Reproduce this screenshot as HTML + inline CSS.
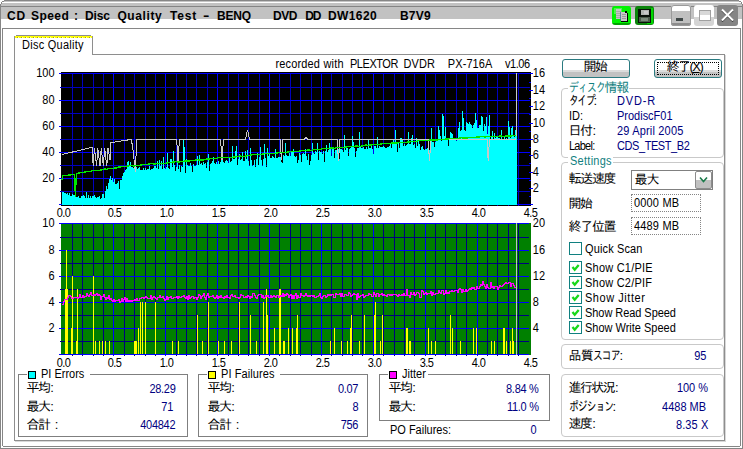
<!DOCTYPE html>
<html><head><meta charset="utf-8"><title>CD Speed : Disc Quality Test</title>
<style>
html,body{margin:0;padding:0}
body{width:743px;height:449px;position:relative;overflow:hidden;background:#fff;font-family:'Liberation Sans','IPAGothic',sans-serif;font-size:12px;color:#000}
u{text-decoration:underline}
</style></head><body>
<div style="position:absolute;left:0px;top:0px;width:743px;height:3px;background:#fff;"></div>
<div style="position:absolute;left:3px;top:1px;width:737px;height:1px;background:#c4c4c4;"></div>
<div style="position:absolute;left:1px;top:3px;width:741px;height:16px;background:#c2c2c2;"></div>
<div style="position:absolute;left:1px;top:6px;width:741px;height:1px;background:#848484;"></div>
<div style="position:absolute;left:1px;top:19px;width:741px;height:9px;background:#fff;"></div>
<div style="position:absolute;left:4px;top:0px;width:735px;height:1px;background:#868686;"></div>
<div style="position:absolute;left:2px;top:1px;width:2px;height:1px;background:#868686;"></div>
<div style="position:absolute;left:739px;top:1px;width:2px;height:1px;background:#868686;"></div>
<div style="position:absolute;left:1px;top:2px;width:1px;height:2px;background:#868686;"></div>
<div style="position:absolute;left:741px;top:2px;width:1px;height:2px;background:#868686;"></div>
<div style="position:absolute;left:0px;top:4px;width:1px;height:445px;background:#868686;"></div>
<div style="position:absolute;left:742px;top:4px;width:1px;height:445px;background:#868686;"></div>
<div style="position:absolute;left:0px;top:448px;width:743px;height:1px;background:#868686;"></div>
<div style="position:absolute;left:2px;top:28px;width:739px;height:1px;background:#868686;"></div>
<div style="position:absolute;left:2px;top:28px;width:1px;height:418px;background:#868686;"></div>
<div style="position:absolute;left:740px;top:28px;width:1px;height:418px;background:#868686;"></div>
<div style="position:absolute;left:3px;top:446px;width:737px;height:1px;background:#868686;"></div>
<div style="position:absolute;left:7px;top:10px;font-size:12px;line-height:12px;color:#000;white-space:pre;letter-spacing:0.9px;font-weight:bold;">CD</div>
<div style="position:absolute;left:31px;top:10px;font-size:12px;line-height:12px;color:#000;white-space:pre;letter-spacing:0.45px;font-weight:bold;">Speed</div>
<div style="position:absolute;left:74px;top:10px;font-size:12px;line-height:12px;color:#000;white-space:pre;font-weight:bold;">:</div>
<div style="position:absolute;left:85px;top:10px;font-size:12px;line-height:12px;color:#000;white-space:pre;letter-spacing:-0.1px;font-weight:bold;">Disc</div>
<div style="position:absolute;left:117.4px;top:10px;font-size:12px;line-height:12px;color:#000;white-space:pre;letter-spacing:0.6px;font-weight:bold;">Quality</div>
<div style="position:absolute;left:170px;top:10px;font-size:12px;line-height:12px;color:#000;white-space:pre;letter-spacing:0.8px;font-weight:bold;">Test</div>
<div style="position:absolute;left:203px;top:10px;font-size:12px;line-height:12px;color:#000;white-space:pre;font-weight:bold;transform:scaleX(1.6);transform-origin:0 0;">-</div>
<div style="position:absolute;left:217px;top:10px;font-size:12px;line-height:12px;color:#000;white-space:pre;letter-spacing:-0.2px;font-weight:bold;">BENQ</div>
<div style="position:absolute;left:273px;top:10px;font-size:12px;line-height:12px;color:#000;white-space:pre;letter-spacing:-0.5px;font-weight:bold;">DVD</div>
<div style="position:absolute;left:305.2px;top:10px;font-size:12px;line-height:12px;color:#000;white-space:pre;letter-spacing:-1px;font-weight:bold;">DD</div>
<div style="position:absolute;left:328px;top:10px;font-size:12px;line-height:12px;color:#000;white-space:pre;letter-spacing:0.4px;font-weight:bold;">DW1620</div>
<div style="position:absolute;left:400px;top:10px;font-size:12px;line-height:12px;color:#000;white-space:pre;letter-spacing:0.2px;font-weight:bold;">B7V9</div>
<div style="position:absolute;left:612px;top:6px;width:19px;height:19px;border-radius:3px;background:linear-gradient(#00f400 0,#00f400 87%,#00a400 87%);overflow:hidden"><svg width="19" height="19" style="position:absolute;left:0;top:0" shape-rendering="crispEdges"><rect x="2" y="2" width="8" height="6" fill="#7ef07e" opacity="0.6"/><rect x="4" y="3" width="5" height="10" fill="#c6c6c6"/><path d="M4 5.5h5M4 7.5h5M4 9.5h5M4 11.5h5" stroke="#a8a8a8"/><rect x="9" y="6" width="6" height="9" fill="#c8c8c8"/><path d="M10 8.5h4M10 10.5h4M10 12.5h4" stroke="#9a9a9a"/><rect x="15" y="7" width="1" height="9" fill="#000"/><rect x="9" y="15" width="7" height="1" fill="#000"/><rect x="13" y="5" width="2" height="2" fill="#000"/><rect x="8" y="6" width="1" height="9" fill="#3a6a9a" opacity="0.7"/></svg></div>
<div style="position:absolute;left:635px;top:6px;width:19px;height:19px;border-radius:3px;background:#0b840b;overflow:hidden"><svg width="19" height="19" style="position:absolute;left:0;top:0" shape-rendering="crispEdges"><rect x="16" y="2" width="2" height="16" fill="#00d800"/><rect x="12" y="17" width="6" height="1" fill="#00d800"/><rect x="3" y="3" width="13" height="14" fill="#081008"/><rect x="6" y="4" width="8" height="5" fill="#b0b4b0"/><rect x="9" y="5" width="4" height="3" fill="#c8c8c8"/><rect x="4" y="11" width="11" height="5" fill="#4a5a4a"/><rect x="6" y="12" width="7" height="3" fill="#7a8a7a"/></svg></div>
<div style="position:absolute;left:671px;top:5px;width:20px;height:21px;border-radius:3px;box-shadow:inset 0 0 0 1px #9a9a9a;background:linear-gradient(#fff 0,#fff 28%,#c0c0c0 28%,#c0c0c0 86%,#8c8c8c 86%);"><div style="position:absolute;left:5px;top:13px;width:7px;height:3px;background:#404848"></div></div>
<div style="position:absolute;left:694px;top:5px;width:20px;height:21px;border-radius:3px;background:linear-gradient(#fff 0,#fff 55%,#d4d4d4 55%);"><div style="position:absolute;left:5px;top:5px;width:10px;height:9px;border:1px solid #a0a0a0;background:linear-gradient(#d8d8d8 0,#d8d8d8 50%,#fff 50%)"></div></div>
<div style="position:absolute;left:717px;top:5px;width:21px;height:21px;border-radius:3px;background:#858585;"><svg width="21" height="21" style="position:absolute;left:0;top:0"><path d="M5 5.5 L16 16.5 M16 5.5 L5 16.5" stroke="#222" stroke-width="1.6" fill="none"/><path d="M5 4.5 L16 15.5 M16 4.5 L5 15.5" stroke="#fff" stroke-width="2" fill="none"/></svg></div>
<div style="position:absolute;left:14px;top:38px;width:1px;height:403px;background:#8e8e8e;"></div>
<div style="position:absolute;left:14px;top:440px;width:711px;height:1px;background:#8e8e8e;"></div>
<div style="position:absolute;left:724px;top:54px;width:1px;height:387px;background:#8e8e8e;"></div>
<div style="position:absolute;left:725px;top:55px;width:1px;height:387px;background:#d8d8d8;"></div>
<div style="position:absolute;left:15px;top:441px;width:711px;height:1px;background:#d8d8d8;"></div>
<div style="position:absolute;left:92px;top:54px;width:633px;height:1px;background:#8e8e8e;"></div>
<div style="position:absolute;left:92px;top:38px;width:1px;height:17px;background:#8e8e8e;"></div>
<div style="position:absolute;left:16px;top:35px;width:75px;height:1px;background:#8e8e8e;"></div>
<div style="position:absolute;left:14px;top:36px;width:1px;height:2px;background:#8e8e8e;"></div>
<div style="position:absolute;left:92px;top:36px;width:1px;height:2px;background:#8e8e8e;"></div>
<div style="position:absolute;left:15px;top:36px;width:77px;height:1px;background:#ffff00;"></div>
<div style="position:absolute;left:15px;top:37px;width:77px;height:1px;background:repeating-linear-gradient(90deg,#ffff00 0,#ffff00 2px,#a0a020 2px,#a0a020 3px,#ffffb0 3px,#ffffb0 4px)"></div>
<div style="position:absolute;left:22px;top:39px;font-size:12px;line-height:12px;color:#000;white-space:pre;letter-spacing:0.3px;transform:scaleX(0.915);transform-origin:0 0;">Disc Quality</div>
<svg width="743" height="449" viewBox="0 0 743 449" style="position:absolute;left:0;top:0" shape-rendering="crispEdges" font-family="Liberation Sans, sans-serif" font-size="12px" fill="#000"><rect x="61" y="72" width="470" height="134" fill="#000"/><rect x="72" y="73" width="1" height="133" fill="#0000c0"/><rect x="82" y="73" width="1" height="133" fill="#0000c0"/><rect x="93" y="73" width="1" height="133" fill="#0000c0"/><rect x="103" y="73" width="1" height="133" fill="#0000c0"/><rect x="113" y="73" width="1" height="133" fill="#0000ff"/><rect x="124" y="73" width="1" height="133" fill="#0000c0"/><rect x="134" y="73" width="1" height="133" fill="#0000c0"/><rect x="145" y="73" width="1" height="133" fill="#0000c0"/><rect x="155" y="73" width="1" height="133" fill="#0000c0"/><rect x="165" y="73" width="1" height="133" fill="#0000ff"/><rect x="176" y="73" width="1" height="133" fill="#0000c0"/><rect x="186" y="73" width="1" height="133" fill="#0000c0"/><rect x="196" y="73" width="1" height="133" fill="#0000c0"/><rect x="207" y="73" width="1" height="133" fill="#0000c0"/><rect x="217" y="73" width="1" height="133" fill="#0000ff"/><rect x="228" y="73" width="1" height="133" fill="#0000c0"/><rect x="238" y="73" width="1" height="133" fill="#0000c0"/><rect x="248" y="73" width="1" height="133" fill="#0000c0"/><rect x="259" y="73" width="1" height="133" fill="#0000c0"/><rect x="269" y="73" width="1" height="133" fill="#0000ff"/><rect x="279" y="73" width="1" height="133" fill="#0000c0"/><rect x="290" y="73" width="1" height="133" fill="#0000c0"/><rect x="300" y="73" width="1" height="133" fill="#0000c0"/><rect x="311" y="73" width="1" height="133" fill="#0000c0"/><rect x="321" y="73" width="1" height="133" fill="#0000ff"/><rect x="331" y="73" width="1" height="133" fill="#0000c0"/><rect x="342" y="73" width="1" height="133" fill="#0000c0"/><rect x="352" y="73" width="1" height="133" fill="#0000c0"/><rect x="362" y="73" width="1" height="133" fill="#0000c0"/><rect x="373" y="73" width="1" height="133" fill="#0000ff"/><rect x="383" y="73" width="1" height="133" fill="#0000c0"/><rect x="394" y="73" width="1" height="133" fill="#0000c0"/><rect x="404" y="73" width="1" height="133" fill="#0000c0"/><rect x="414" y="73" width="1" height="133" fill="#0000c0"/><rect x="425" y="73" width="1" height="133" fill="#0000ff"/><rect x="435" y="73" width="1" height="133" fill="#0000c0"/><rect x="445" y="73" width="1" height="133" fill="#0000c0"/><rect x="456" y="73" width="1" height="133" fill="#0000c0"/><rect x="466" y="73" width="1" height="133" fill="#0000c0"/><rect x="477" y="73" width="1" height="133" fill="#0000ff"/><rect x="487" y="73" width="1" height="133" fill="#0000c0"/><rect x="497" y="73" width="1" height="133" fill="#0000c0"/><rect x="508" y="73" width="1" height="133" fill="#0000c0"/><rect x="518" y="73" width="1" height="133" fill="#0000c0"/><rect x="59" y="204" width="471" height="1" fill="#0000ff"/><rect x="60" y="191" width="470" height="1" fill="#0000c0"/><rect x="59" y="178" width="471" height="1" fill="#0000ff"/><rect x="60" y="165" width="470" height="1" fill="#0000c0"/><rect x="59" y="152" width="471" height="1" fill="#0000ff"/><rect x="60" y="139" width="470" height="1" fill="#0000c0"/><rect x="59" y="126" width="471" height="1" fill="#0000ff"/><rect x="60" y="113" width="470" height="1" fill="#0000c0"/><rect x="59" y="100" width="471" height="1" fill="#0000ff"/><rect x="60" y="87" width="470" height="1" fill="#0000c0"/><rect x="59" y="73" width="471" height="1" fill="#0000ff"/><rect x="529" y="204" width="4" height="1" fill="#0000ff"/><rect x="529" y="196" width="2" height="1" fill="#0000ff"/><rect x="529" y="188" width="4" height="1" fill="#0000ff"/><rect x="529" y="180" width="2" height="1" fill="#0000ff"/><rect x="529" y="172" width="4" height="1" fill="#0000ff"/><rect x="529" y="163" width="2" height="1" fill="#0000ff"/><rect x="529" y="155" width="4" height="1" fill="#0000ff"/><rect x="529" y="147" width="2" height="1" fill="#0000ff"/><rect x="529" y="139" width="4" height="1" fill="#0000ff"/><rect x="529" y="131" width="2" height="1" fill="#0000ff"/><rect x="529" y="123" width="4" height="1" fill="#0000ff"/><rect x="529" y="114" width="2" height="1" fill="#0000ff"/><rect x="529" y="106" width="4" height="1" fill="#0000ff"/><rect x="529" y="98" width="2" height="1" fill="#0000ff"/><rect x="529" y="90" width="4" height="1" fill="#0000ff"/><rect x="529" y="82" width="2" height="1" fill="#0000ff"/><rect x="529" y="73" width="4" height="1" fill="#0000ff"/><path d="M62 205V192H63V192H64V193H65V193H66V194H67V193H68V195H69V193H70V196H71V196H72V194H73V195H74V195H75V194H76V197H77V197H78V196H79V198H80V198H81V196H82V196H83V195H84V196H85V198H86V192H87V198H88V195H89V198H90V196H91V198H92V196H93V196H94V195H95V197H96V198H97V197H98V197H99V196H100V199H101V198H102V194H103V194H104V198H105V191H106V186H107V189H108V183H109V179H110V176H111V180H112V178H113V182H114V179H115V184H116V184H117V183H118V181H119V189H120V180H121V180H122V176H123V173H124V172H125V170H126V169H127V162H128V161H129V166H130V162H131V167H132V167H133V168H134V169H135V170H136V167H137V169H138V168H139V167H140V170H141V170H142V170H143V168H144V170H145V168H146V170H147V169H148V169H149V166H150V170H151V169H152V169H153V168H154V166H155V166H156V168H157V161H158V169H159V160H160V166H161V161H162V169H163V157H164V168H165V169H166V167H167V153H168V168H169V169H170V159H171V159H172V167H173V151H174V165H175V171H176V167H177V158H178V169H179V165H180V172H181V166H182V167H183V140H184V147H185V173H186V159H187V165H188V166H189V166H190V163H191V166H192V172H193V164H194V166H195V166H196V165H197V156H198V165H199V155H200V164H201V163H202V165H203V162H204V164H205V163H206V168H207V162H208V154H209V171H210V164H211V163H212V161H213V157H214V163H215V164H216V162H217V164H218V161H219V164H220V162H221V155H222V160H223V162H224V163H225V161H226V160H227V161H228V163H229V157H230V162H231V161H232V146H233V159H234V159H235V151H236V146H237V165H238V159H239V154H240V160H241V159H242V152H243V161H244V161H245V151H246V159H247V150H248V161H249V166H250V148H251V160H252V166H253V165H254V160H255V167H256V159H257V153H258V165H259V157H260V147H261V160H262V166H263V159H264V144H265V158H266V167H267V148H268V156H269V154H270V158H271V158H272V156H273V157H274V158H275V149H276V158H277V158H278V157H279V157H280V157H281V162H282V163H283V155H284V156H285V143H286V155H287V156H288V156H289V153H290V156H291V151H292V151H293V149H294V156H295V157H296V156H297V163H298V160H299V153H300V155H301V162H302V154H303V153H304V154H305V149H306V156H307V160H308V154H309V165H310V161H311V155H312V143H313V153H314V154H315V151H316V152H317V143H318V160H319V151H320V152H321V152H322V154H323V151H324V162H325V151H326V145H327V152H328V150H329V143H330V149H331V156H332V149H333V149H334V158H335V150H336V150H337V152H338V149H339V159H340V149H341V149H342V150H343V152H344V135H345V150H346V148H347V148H348V156H349V149H350V148H351V146H352V136H353V142H354V148H355V157H356V151H357V148H358V148H359V132H360V147H361V148H362V148H363V147H364V149H365V149H366V147H367V149H368V139H369V148H370V148H371V146H372V149H373V154H374V146H375V146H376V148H377V137H378V148H379V146H380V147H381V147H382V147H383V146H384V147H385V148H386V148H387V147H388V147H389V146H390V144H391V148H392V144H393V140H394V144H395V130H396V144H397V152H398V143H399V148H400V138H401V138H402V140H403V146H404V144H405V146H406V145H407V144H408V132H409V144H410V144H411V138H412V135H413V145H414V144H415V148H416V138H417V146H418V139H419V144H420V150H421V147H422V146H423V149H424V150H425V149H426V149H427V148H428V149H429V150H430V152H431V128H432V142H433V142H434V147H435V142H436V139H437V141H438V126H439V130H440V136H441V141H442V114H443V116H444V136H445V127H446V139H447V138H448V146H449V139H450V132H451V133H452V134H453V138H454V139H455V140H456V141H457V139H458V128H459V122H460V131H461V130H462V111H463V118H464V130H465V131H466V122H467V123H468V124H469V122H470V124H471V125H472V128H473V125H474V123H475V113H476V120H477V128H478V128H479V125H480V125H481V116H482V117H483V131H484V124H485V126H486V117H487V134H488V126H489V115H490V139H491V137H492V131H493V139H494V133H495V138H496V136H497V137H498V138H499V138H500V139H501V130H502V140H503V139H504V137H505V139H506V138H507V139H508V121H509V127H510V138H511V128H512V126H513V135H514V137H515V130H516V128H517V205Z" fill="#00ffff"/><polyline points="62.0,154.5 92.0,147.4 93.2,166.0 94.4,148.0 96.6,166.0 97.8,148.0 100.0,166.0 101.2,148.0 103.4,166.0 104.6,148.0 106.8,166.0 108.0,148.0 110.0,160.0 111.0,142.6 131.4,139.4 133.0,150.0 135.3,171.5 136.8,139.0 176.7,139.0 178.0,162.0 179.5,139.0 220.5,139.0 222.0,160.0 223.5,139.0 245.5,139.0 247.6,129.7 249.5,139.0 280.0,139.0 281.4,160.0 283.0,139.0 304.5,139.0 306.0,137.5 307.5,139.0 337.0,139.0 338.5,161.0 340.0,139.0 428.0,139.0 429.5,161.0 431.0,139.0 487.0,139.0 488.2,161.0 489.5,139.0 516.0,139.0 516.5,73.0" fill="none" stroke="#c8c8c8" stroke-width="1"/><polyline points="62.0,180.3 63.0,175.6 74.5,174.6 75.4,196.5 76.3,174.4 77.0,173.4 80.0,172.8 83.0,172.5 86.0,171.8 89.0,171.7 92.0,170.8 95.0,170.8 98.0,170.3 101.0,170.1 104.0,169.1 107.0,169.2 110.0,168.3 113.0,168.2 116.0,168.1 119.0,167.0 122.0,166.8 125.0,166.4 128.0,166.1 131.0,165.6 134.0,166.0 137.0,165.7 140.0,165.1 143.0,164.8 146.0,164.7 149.0,164.0 152.0,163.7 155.0,164.1 158.0,163.4 161.0,163.3 164.0,163.4 167.0,163.1 170.0,162.5 173.0,162.0 176.0,161.8 179.0,162.0 182.0,161.7 185.0,160.9 188.0,161.2 191.0,160.5 194.0,160.3 197.0,159.8 200.0,160.1 203.0,160.0 206.0,159.1 209.0,159.1 212.0,158.5 215.0,158.8 218.0,157.9 221.0,157.6 224.0,157.9 227.0,157.3 230.0,157.5 233.0,157.2 236.0,156.8 239.0,156.1 242.0,156.2 245.0,156.2 248.0,155.5 251.0,154.9 254.0,154.8 257.0,154.6 260.0,154.6 263.0,154.0 266.0,153.7 269.0,153.5 272.0,153.5 275.0,153.4 278.0,152.8 281.0,152.7 284.0,152.6 287.0,152.1 290.0,151.6 293.0,151.4 296.0,151.6 299.0,151.2 302.0,150.6 305.0,150.6 308.0,149.9 311.0,150.4 314.0,149.7 317.0,149.5 320.0,149.3 323.0,148.6 326.0,148.8 329.0,148.3 332.0,148.0 335.0,148.2 338.0,147.4 341.0,147.3 344.0,147.4 347.0,146.8 350.0,146.5 353.0,146.5 356.0,146.0 359.0,146.3 362.0,146.1 365.0,145.1 368.0,145.2 371.0,145.1 374.0,144.6 377.0,144.8 380.0,144.2 383.0,143.7 386.0,143.7 389.0,143.5 392.0,143.1 395.0,143.0 398.0,142.9 401.0,142.4 404.0,142.2 407.0,142.2 410.0,141.8 413.0,141.4 416.0,141.5 419.0,140.6 422.0,140.9 425.0,140.2 428.0,140.4 431.0,139.9 434.0,139.9 437.0,139.9 440.0,139.7 443.0,139.6 446.0,138.9 449.0,138.9 452.0,138.5 455.0,138.6 458.0,138.4 461.0,137.8 464.0,138.1 467.0,138.0 470.0,137.7 473.0,137.8 476.0,137.1 479.0,136.9 482.0,136.7 485.0,136.9 488.0,136.7 491.0,136.6 494.0,136.3 497.0,136.6 500.0,135.9 503.0,136.4 506.0,136.0 509.0,135.9 512.0,135.9 515.0,135.3 516.0,135.5" fill="none" stroke="#00e800" stroke-width="1.3"/><rect x="61" y="223" width="470" height="132" fill="#008000"/><rect x="72" y="223" width="1" height="133" fill="#000080"/><rect x="82" y="223" width="1" height="133" fill="#000080"/><rect x="93" y="223" width="1" height="133" fill="#000080"/><rect x="103" y="223" width="1" height="133" fill="#000080"/><rect x="113" y="223" width="1" height="133" fill="#0000ff"/><rect x="124" y="223" width="1" height="133" fill="#000080"/><rect x="134" y="223" width="1" height="133" fill="#000080"/><rect x="145" y="223" width="1" height="133" fill="#000080"/><rect x="155" y="223" width="1" height="133" fill="#000080"/><rect x="165" y="223" width="1" height="133" fill="#0000ff"/><rect x="176" y="223" width="1" height="133" fill="#000080"/><rect x="186" y="223" width="1" height="133" fill="#000080"/><rect x="196" y="223" width="1" height="133" fill="#000080"/><rect x="207" y="223" width="1" height="133" fill="#000080"/><rect x="217" y="223" width="1" height="133" fill="#0000ff"/><rect x="228" y="223" width="1" height="133" fill="#000080"/><rect x="238" y="223" width="1" height="133" fill="#000080"/><rect x="248" y="223" width="1" height="133" fill="#000080"/><rect x="259" y="223" width="1" height="133" fill="#000080"/><rect x="269" y="223" width="1" height="133" fill="#0000ff"/><rect x="279" y="223" width="1" height="133" fill="#000080"/><rect x="290" y="223" width="1" height="133" fill="#000080"/><rect x="300" y="223" width="1" height="133" fill="#000080"/><rect x="311" y="223" width="1" height="133" fill="#000080"/><rect x="321" y="223" width="1" height="133" fill="#0000ff"/><rect x="331" y="223" width="1" height="133" fill="#000080"/><rect x="342" y="223" width="1" height="133" fill="#000080"/><rect x="352" y="223" width="1" height="133" fill="#000080"/><rect x="362" y="223" width="1" height="133" fill="#000080"/><rect x="373" y="223" width="1" height="133" fill="#0000ff"/><rect x="383" y="223" width="1" height="133" fill="#000080"/><rect x="394" y="223" width="1" height="133" fill="#000080"/><rect x="404" y="223" width="1" height="133" fill="#000080"/><rect x="414" y="223" width="1" height="133" fill="#000080"/><rect x="425" y="223" width="1" height="133" fill="#0000ff"/><rect x="435" y="223" width="1" height="133" fill="#000080"/><rect x="445" y="223" width="1" height="133" fill="#000080"/><rect x="456" y="223" width="1" height="133" fill="#000080"/><rect x="466" y="223" width="1" height="133" fill="#000080"/><rect x="477" y="223" width="1" height="133" fill="#0000ff"/><rect x="487" y="223" width="1" height="133" fill="#000080"/><rect x="497" y="223" width="1" height="133" fill="#000080"/><rect x="508" y="223" width="1" height="133" fill="#000080"/><rect x="518" y="223" width="1" height="133" fill="#000080"/><rect x="59" y="354" width="470" height="1" fill="#0000ff"/><rect x="60" y="341" width="469" height="1" fill="#000080"/><rect x="59" y="328" width="470" height="1" fill="#0000ff"/><rect x="60" y="315" width="469" height="1" fill="#000080"/><rect x="59" y="302" width="470" height="1" fill="#0000ff"/><rect x="60" y="289" width="469" height="1" fill="#000080"/><rect x="59" y="276" width="470" height="1" fill="#0000ff"/><rect x="60" y="263" width="469" height="1" fill="#000080"/><rect x="59" y="250" width="470" height="1" fill="#0000ff"/><rect x="60" y="237" width="469" height="1" fill="#000080"/><rect x="59" y="223" width="470" height="1" fill="#0000ff"/><rect x="65" y="289" width="1" height="65" fill="#ffff00"/><rect x="66" y="250" width="1" height="104" fill="#ffff00"/><rect x="67" y="289" width="1" height="65" fill="#ffff00"/><rect x="71" y="328" width="1" height="26" fill="#ffff00"/><rect x="72" y="276" width="1" height="78" fill="#ffff00"/><rect x="76" y="341" width="1" height="13" fill="#ffff00"/><rect x="77" y="289" width="1" height="65" fill="#ffff00"/><rect x="93" y="276" width="1" height="78" fill="#ffff00"/><rect x="95" y="341" width="1" height="13" fill="#ffff00"/><rect x="99" y="341" width="1" height="13" fill="#ffff00"/><rect x="102" y="341" width="1" height="13" fill="#ffff00"/><rect x="105" y="341" width="1" height="13" fill="#ffff00"/><rect x="109" y="341" width="1" height="13" fill="#ffff00"/><rect x="134" y="341" width="1" height="13" fill="#ffff00"/><rect x="135" y="341" width="1" height="13" fill="#ffff00"/><rect x="136" y="341" width="1" height="13" fill="#ffff00"/><rect x="138" y="328" width="1" height="26" fill="#ffff00"/><rect x="140" y="302" width="1" height="52" fill="#ffff00"/><rect x="142" y="302" width="1" height="52" fill="#ffff00"/><rect x="145" y="302" width="1" height="52" fill="#ffff00"/><rect x="155" y="302" width="1" height="52" fill="#ffff00"/><rect x="172" y="341" width="1" height="13" fill="#ffff00"/><rect x="178" y="341" width="1" height="13" fill="#ffff00"/><rect x="197" y="315" width="1" height="39" fill="#ffff00"/><rect x="202" y="341" width="1" height="13" fill="#ffff00"/><rect x="208" y="302" width="1" height="52" fill="#ffff00"/><rect x="218" y="341" width="1" height="13" fill="#ffff00"/><rect x="224" y="341" width="1" height="13" fill="#ffff00"/><rect x="231" y="341" width="1" height="13" fill="#ffff00"/><rect x="239" y="302" width="1" height="52" fill="#ffff00"/><rect x="250" y="315" width="1" height="39" fill="#ffff00"/><rect x="256" y="341" width="1" height="13" fill="#ffff00"/><rect x="263" y="302" width="1" height="52" fill="#ffff00"/><rect x="266" y="289" width="1" height="65" fill="#ffff00"/><rect x="267" y="315" width="1" height="39" fill="#ffff00"/><rect x="274" y="328" width="1" height="26" fill="#ffff00"/><rect x="279" y="289" width="1" height="65" fill="#ffff00"/><rect x="280" y="289" width="1" height="65" fill="#ffff00"/><rect x="283" y="341" width="1" height="13" fill="#ffff00"/><rect x="284" y="341" width="1" height="13" fill="#ffff00"/><rect x="288" y="328" width="1" height="26" fill="#ffff00"/><rect x="292" y="328" width="1" height="26" fill="#ffff00"/><rect x="296" y="328" width="1" height="26" fill="#ffff00"/><rect x="297" y="315" width="1" height="39" fill="#ffff00"/><rect x="330" y="341" width="1" height="13" fill="#ffff00"/><rect x="334" y="328" width="1" height="26" fill="#ffff00"/><rect x="341" y="341" width="1" height="13" fill="#ffff00"/><rect x="347" y="341" width="1" height="13" fill="#ffff00"/><rect x="350" y="328" width="1" height="26" fill="#ffff00"/><rect x="351" y="315" width="1" height="39" fill="#ffff00"/><rect x="359" y="341" width="1" height="13" fill="#ffff00"/><rect x="364" y="315" width="1" height="39" fill="#ffff00"/><rect x="374" y="315" width="1" height="39" fill="#ffff00"/><rect x="375" y="302" width="1" height="52" fill="#ffff00"/><rect x="380" y="341" width="1" height="13" fill="#ffff00"/><rect x="382" y="315" width="1" height="39" fill="#ffff00"/><rect x="406" y="328" width="1" height="26" fill="#ffff00"/><rect x="409" y="341" width="1" height="13" fill="#ffff00"/><rect x="407" y="328" width="1" height="26" fill="#ffff00"/><rect x="410" y="341" width="1" height="13" fill="#ffff00"/><rect x="428" y="328" width="1" height="26" fill="#ffff00"/><rect x="431" y="341" width="1" height="13" fill="#ffff00"/><rect x="435" y="341" width="1" height="13" fill="#ffff00"/><rect x="450" y="315" width="1" height="39" fill="#ffff00"/><rect x="452" y="328" width="1" height="26" fill="#ffff00"/><rect x="460" y="341" width="1" height="13" fill="#ffff00"/><rect x="473" y="328" width="1" height="26" fill="#ffff00"/><rect x="476" y="328" width="1" height="26" fill="#ffff00"/><rect x="491" y="341" width="1" height="13" fill="#ffff00"/><rect x="494" y="341" width="1" height="13" fill="#ffff00"/><rect x="503" y="328" width="1" height="26" fill="#ffff00"/><rect x="504" y="328" width="1" height="26" fill="#ffff00"/><rect x="506" y="341" width="1" height="13" fill="#ffff00"/><rect x="510" y="341" width="1" height="13" fill="#ffff00"/><rect x="512" y="328" width="1" height="26" fill="#ffff00"/><rect x="513" y="341" width="1" height="13" fill="#ffff00"/><rect x="516" y="223" width="1" height="132" fill="#c0c0c0"/><path d="M62 304h1v1h-1zM63 301h1v4h-1zM64 299h1v3h-1zM65 299h1v1h-1zM66 299h1v1h-1zM67 297h1v3h-1zM68 295h1v3h-1zM69 295h1v1h-1zM70 295h1v2h-1zM71 296h1v3h-1zM72 298h1v1h-1zM73 297h1v2h-1zM74 297h1v1h-1zM75 297h1v1h-1zM76 297h1v1h-1zM77 297h1v2h-1zM78 297h1v2h-1zM79 294h1v4h-1zM80 294h1v4h-1zM81 297h1v1h-1zM82 295h1v3h-1zM83 295h1v3h-1zM84 296h1v2h-1zM85 296h1v1h-1zM86 293h1v4h-1zM87 293h1v3h-1zM88 295h1v2h-1zM89 294h1v3h-1zM90 292h1v3h-1zM91 292h1v4h-1zM92 295h1v1h-1zM93 294h1v2h-1zM94 294h1v2h-1zM95 294h1v2h-1zM96 293h1v2h-1zM97 293h1v3h-1zM98 294h1v2h-1zM99 294h1v2h-1zM100 295h1v5h-1zM101 296h1v4h-1zM102 296h1v1h-1zM103 294h1v3h-1zM104 294h1v4h-1zM105 297h1v3h-1zM106 297h1v3h-1zM107 297h1v2h-1zM108 295h1v4h-1zM109 295h1v5h-1zM110 298h1v2h-1zM111 298h1v3h-1zM112 300h1v2h-1zM113 299h1v3h-1zM114 299h1v3h-1zM115 300h1v2h-1zM116 300h1v1h-1zM117 300h1v1h-1zM118 299h1v2h-1zM119 299h1v4h-1zM120 301h1v2h-1zM121 298h1v4h-1zM122 298h1v4h-1zM123 299h1v3h-1zM124 297h1v3h-1zM125 297h1v5h-1zM126 298h1v4h-1zM127 298h1v4h-1zM128 300h1v2h-1zM129 300h1v2h-1zM130 300h1v2h-1zM131 300h1v2h-1zM132 300h1v2h-1zM133 300h1v1h-1zM134 299h1v2h-1zM135 299h1v2h-1zM136 298h1v3h-1zM137 298h1v3h-1zM138 300h1v1h-1zM139 298h1v3h-1zM140 298h1v1h-1zM141 297h1v2h-1zM142 297h1v1h-1zM143 297h1v2h-1zM144 297h1v2h-1zM145 296h1v2h-1zM146 296h1v2h-1zM147 297h1v2h-1zM148 298h1v1h-1zM149 298h1v1h-1zM150 295h1v4h-1zM151 295h1v5h-1zM152 297h1v3h-1zM153 296h1v2h-1zM154 296h1v2h-1zM155 297h1v2h-1zM156 298h1v2h-1zM157 297h1v3h-1zM158 297h1v1h-1zM159 295h1v3h-1zM160 295h1v3h-1zM161 297h1v1h-1zM162 296h1v2h-1zM163 296h1v3h-1zM164 298h1v3h-1zM165 299h1v2h-1zM166 296h1v4h-1zM167 296h1v4h-1zM168 297h1v3h-1zM169 297h1v1h-1zM170 296h1v2h-1zM171 296h1v3h-1zM172 298h1v1h-1zM173 297h1v2h-1zM174 297h1v1h-1zM175 297h1v1h-1zM176 296h1v2h-1zM177 296h1v3h-1zM178 296h1v3h-1zM179 296h1v2h-1zM180 297h1v1h-1zM181 296h1v2h-1zM182 296h1v1h-1zM183 295h1v2h-1zM184 295h1v3h-1zM185 297h1v2h-1zM186 296h1v3h-1zM187 296h1v4h-1zM188 295h1v5h-1zM189 295h1v4h-1zM190 297h1v2h-1zM191 296h1v2h-1zM192 296h1v1h-1zM193 296h1v3h-1zM194 297h1v2h-1zM195 297h1v1h-1zM196 297h1v3h-1zM197 297h1v3h-1zM198 294h1v4h-1zM199 294h1v2h-1zM200 295h1v4h-1zM201 296h1v3h-1zM202 295h1v2h-1zM203 293h1v3h-1zM204 293h1v5h-1zM205 297h1v3h-1zM206 295h1v5h-1zM207 293h1v3h-1zM208 293h1v5h-1zM209 296h1v2h-1zM210 296h1v1h-1zM211 296h1v1h-1zM212 295h1v2h-1zM213 295h1v3h-1zM214 297h1v2h-1zM215 297h1v2h-1zM216 295h1v3h-1zM217 295h1v4h-1zM218 296h1v3h-1zM219 296h1v2h-1zM220 295h1v3h-1zM221 295h1v3h-1zM222 297h1v1h-1zM223 297h1v2h-1zM224 296h1v3h-1zM225 296h1v2h-1zM226 295h1v3h-1zM227 295h1v3h-1zM228 297h1v1h-1zM229 297h1v2h-1zM230 295h1v4h-1zM231 294h1v2h-1zM232 294h1v3h-1zM233 296h1v1h-1zM234 295h1v2h-1zM235 295h1v3h-1zM236 297h1v1h-1zM237 297h1v1h-1zM238 297h1v2h-1zM239 297h1v2h-1zM240 294h1v4h-1zM241 294h1v2h-1zM242 295h1v1h-1zM243 295h1v3h-1zM244 297h1v1h-1zM245 296h1v2h-1zM246 296h1v2h-1zM247 295h1v3h-1zM248 295h1v2h-1zM249 296h1v3h-1zM250 296h1v3h-1zM251 296h1v2h-1zM252 293h1v5h-1zM253 293h1v1h-1zM254 293h1v3h-1zM255 295h1v3h-1zM256 297h1v2h-1zM257 295h1v4h-1zM258 294h1v2h-1zM259 294h1v1h-1zM260 294h1v1h-1zM261 294h1v4h-1zM262 295h1v3h-1zM263 295h1v4h-1zM264 297h1v2h-1zM265 295h1v3h-1zM266 295h1v2h-1zM267 295h1v2h-1zM268 295h1v3h-1zM269 297h1v1h-1zM270 295h1v3h-1zM271 295h1v3h-1zM272 296h1v2h-1zM273 295h1v2h-1zM274 295h1v2h-1zM275 296h1v2h-1zM276 295h1v3h-1zM277 295h1v1h-1zM278 295h1v3h-1zM279 296h1v2h-1zM280 295h1v2h-1zM281 295h1v2h-1zM282 293h1v4h-1zM283 293h1v4h-1zM284 294h1v3h-1zM285 294h1v2h-1zM286 293h1v3h-1zM287 293h1v2h-1zM288 294h1v4h-1zM289 295h1v3h-1zM290 294h1v2h-1zM291 294h1v5h-1zM292 295h1v4h-1zM293 295h1v4h-1zM294 295h1v4h-1zM295 293h1v3h-1zM296 293h1v6h-1zM297 295h1v4h-1zM298 295h1v3h-1zM299 297h1v1h-1zM300 293h1v5h-1zM301 293h1v3h-1zM302 295h1v1h-1zM303 295h1v2h-1zM304 295h1v2h-1zM305 293h1v3h-1zM306 293h1v3h-1zM307 295h1v2h-1zM308 295h1v2h-1zM309 295h1v2h-1zM310 295h1v2h-1zM311 295h1v1h-1zM312 295h1v2h-1zM313 295h1v2h-1zM314 295h1v3h-1zM315 297h1v1h-1zM316 296h1v2h-1zM317 296h1v1h-1zM318 295h1v2h-1zM319 293h1v3h-1zM320 293h1v5h-1zM321 297h1v2h-1zM322 296h1v3h-1zM323 295h1v2h-1zM324 295h1v1h-1zM325 295h1v3h-1zM326 296h1v2h-1zM327 294h1v3h-1zM328 294h1v2h-1zM329 294h1v2h-1zM330 294h1v2h-1zM331 294h1v2h-1zM332 294h1v1h-1zM333 294h1v4h-1zM334 297h1v1h-1zM335 293h1v5h-1zM336 293h1v2h-1zM337 294h1v1h-1zM338 294h1v1h-1zM339 293h1v2h-1zM340 293h1v4h-1zM341 293h1v4h-1zM342 293h1v4h-1zM343 296h1v1h-1zM344 294h1v3h-1zM345 294h1v1h-1zM346 294h1v2h-1zM347 295h1v1h-1zM348 292h1v4h-1zM349 292h1v2h-1zM350 293h1v4h-1zM351 295h1v2h-1zM352 294h1v2h-1zM353 293h1v2h-1zM354 293h1v2h-1zM355 294h1v1h-1zM356 294h1v6h-1zM357 293h1v7h-1zM358 293h1v5h-1zM359 296h1v2h-1zM360 295h1v2h-1zM361 295h1v1h-1zM362 294h1v2h-1zM363 294h1v4h-1zM364 296h1v2h-1zM365 295h1v2h-1zM366 295h1v1h-1zM367 295h1v1h-1zM368 293h1v3h-1zM369 293h1v2h-1zM370 294h1v1h-1zM371 294h1v3h-1zM372 296h1v1h-1zM373 292h1v5h-1zM374 292h1v3h-1zM375 294h1v3h-1zM376 293h1v4h-1zM377 293h1v1h-1zM378 293h1v4h-1zM379 294h1v3h-1zM380 294h1v1h-1zM381 293h1v2h-1zM382 293h1v3h-1zM383 294h1v2h-1zM384 294h1v2h-1zM385 295h1v1h-1zM386 295h1v2h-1zM387 294h1v3h-1zM388 294h1v1h-1zM389 294h1v2h-1zM390 294h1v2h-1zM391 294h1v2h-1zM392 294h1v2h-1zM393 294h1v1h-1zM394 294h1v1h-1zM395 294h1v1h-1zM396 294h1v2h-1zM397 295h1v2h-1zM398 294h1v3h-1zM399 294h1v2h-1zM400 295h1v1h-1zM401 294h1v2h-1zM402 294h1v2h-1zM403 293h1v3h-1zM404 293h1v3h-1zM405 295h1v1h-1zM406 289h1v7h-1zM407 289h1v7h-1zM408 295h1v1h-1zM409 295h1v3h-1zM410 292h1v6h-1zM411 292h1v3h-1zM412 294h1v1h-1zM413 292h1v3h-1zM414 292h1v4h-1zM415 294h1v2h-1zM416 292h1v3h-1zM417 292h1v1h-1zM418 292h1v2h-1zM419 293h1v5h-1zM420 297h1v1h-1zM421 290h1v8h-1zM422 290h1v2h-1zM423 291h1v4h-1zM424 293h1v2h-1zM425 292h1v2h-1zM426 292h1v3h-1zM427 293h1v2h-1zM428 293h1v1h-1zM429 293h1v1h-1zM430 291h1v3h-1zM431 291h1v5h-1zM432 292h1v4h-1zM433 292h1v3h-1zM434 294h1v1h-1zM435 293h1v2h-1zM436 293h1v1h-1zM437 293h1v1h-1zM438 290h1v4h-1zM439 290h1v3h-1zM440 292h1v2h-1zM441 290h1v4h-1zM442 290h1v1h-1zM443 290h1v5h-1zM444 293h1v2h-1zM445 290h1v4h-1zM446 290h1v4h-1zM447 292h1v2h-1zM448 292h1v2h-1zM449 291h1v3h-1zM450 291h1v1h-1zM451 290h1v2h-1zM452 290h1v2h-1zM453 291h1v1h-1zM454 290h1v2h-1zM455 290h1v1h-1zM456 290h1v1h-1zM457 290h1v3h-1zM458 289h1v4h-1zM459 288h1v2h-1zM460 288h1v2h-1zM461 289h1v4h-1zM462 289h1v4h-1zM463 289h1v3h-1zM464 291h1v1h-1zM465 289h1v3h-1zM466 289h1v3h-1zM467 290h1v2h-1zM468 289h1v2h-1zM469 288h1v2h-1zM470 288h1v2h-1zM471 287h1v3h-1zM472 287h1v2h-1zM473 287h1v2h-1zM474 287h1v3h-1zM475 289h1v1h-1zM476 286h1v4h-1zM477 286h1v3h-1zM478 288h1v1h-1zM479 286h1v3h-1zM480 284h1v3h-1zM481 284h1v2h-1zM482 281h1v5h-1zM483 281h1v4h-1zM484 284h1v3h-1zM485 286h1v3h-1zM486 284h1v5h-1zM487 284h1v4h-1zM488 287h1v2h-1zM489 288h1v1h-1zM490 282h1v7h-1zM491 282h1v6h-1zM492 286h1v2h-1zM493 286h1v3h-1zM494 286h1v3h-1zM495 286h1v1h-1zM496 286h1v1h-1zM497 286h1v4h-1zM498 287h1v3h-1zM499 285h1v3h-1zM500 285h1v2h-1zM501 286h1v1h-1zM502 285h1v2h-1zM503 284h1v2h-1zM504 283h1v2h-1zM505 282h1v2h-1zM506 282h1v2h-1zM507 283h1v1h-1zM508 282h1v2h-1zM509 282h1v1h-1zM510 282h1v5h-1zM511 283h1v4h-1zM512 283h1v1h-1zM513 283h1v3h-1zM514 285h1v3h-1zM515 287h1v1h-1z" fill="#ff00ff"/><text transform="translate(54.5 77) scale(0.915 1)" text-anchor="end">100</text><text transform="translate(54.5 104) scale(0.915 1)" text-anchor="end">80</text><text transform="translate(54.5 130) scale(0.915 1)" text-anchor="end">60</text><text transform="translate(54.5 156) scale(0.915 1)" text-anchor="end">40</text><text transform="translate(54.5 182) scale(0.915 1)" text-anchor="end">20</text><text transform="translate(532.8 192) scale(0.915 1)" text-anchor="start">2</text><text transform="translate(532.8 176) scale(0.915 1)" text-anchor="start">4</text><text transform="translate(532.8 159) scale(0.915 1)" text-anchor="start">6</text><text transform="translate(532.8 143) scale(0.915 1)" text-anchor="start">8</text><text transform="translate(532.8 127) scale(0.915 1)" text-anchor="start">10</text><text transform="translate(532.8 110) scale(0.915 1)" text-anchor="start">12</text><text transform="translate(532.8 94) scale(0.915 1)" text-anchor="start">14</text><text transform="translate(532.8 77) scale(0.915 1)" text-anchor="start">16</text><text transform="translate(63.5 217) scale(0.915 1)" text-anchor="middle" letter-spacing="-0.6">0.0</text><text transform="translate(114.5 217) scale(0.915 1)" text-anchor="middle" letter-spacing="-0.6">0.5</text><text transform="translate(166.5 217) scale(0.915 1)" text-anchor="middle" letter-spacing="-0.6">1.0</text><text transform="translate(218.5 217) scale(0.915 1)" text-anchor="middle" letter-spacing="-0.6">1.5</text><text transform="translate(270.5 217) scale(0.915 1)" text-anchor="middle" letter-spacing="-0.6">2.0</text><text transform="translate(322.5 217) scale(0.915 1)" text-anchor="middle" letter-spacing="-0.6">2.5</text><text transform="translate(374.5 217) scale(0.915 1)" text-anchor="middle" letter-spacing="-0.6">3.0</text><text transform="translate(426.5 217) scale(0.915 1)" text-anchor="middle" letter-spacing="-0.6">3.5</text><text transform="translate(478.5 217) scale(0.915 1)" text-anchor="middle" letter-spacing="-0.6">4.0</text><text transform="translate(530.5 217) scale(0.915 1)" text-anchor="middle" letter-spacing="-0.6">4.5</text><text transform="translate(54.5 332) scale(0.915 1)" text-anchor="end">2</text><text transform="translate(54.5 306) scale(0.915 1)" text-anchor="end">4</text><text transform="translate(54.5 280) scale(0.915 1)" text-anchor="end">6</text><text transform="translate(54.5 254) scale(0.915 1)" text-anchor="end">8</text><text transform="translate(54.5 227) scale(0.915 1)" text-anchor="end">10</text><text transform="translate(532.8 332) scale(0.915 1)" text-anchor="start">4</text><text transform="translate(532.8 306) scale(0.915 1)" text-anchor="start">8</text><text transform="translate(532.8 280) scale(0.915 1)" text-anchor="start">12</text><text transform="translate(532.8 254) scale(0.915 1)" text-anchor="start">16</text><text transform="translate(532.8 227) scale(0.915 1)" text-anchor="start">20</text><text transform="translate(63.5 367) scale(0.915 1)" text-anchor="middle" letter-spacing="-0.6">0.0</text><text transform="translate(114.5 367) scale(0.915 1)" text-anchor="middle" letter-spacing="-0.6">0.5</text><text transform="translate(166.5 367) scale(0.915 1)" text-anchor="middle" letter-spacing="-0.6">1.0</text><text transform="translate(218.5 367) scale(0.915 1)" text-anchor="middle" letter-spacing="-0.6">1.5</text><text transform="translate(270.5 367) scale(0.915 1)" text-anchor="middle" letter-spacing="-0.6">2.0</text><text transform="translate(322.5 367) scale(0.915 1)" text-anchor="middle" letter-spacing="-0.6">2.5</text><text transform="translate(374.5 367) scale(0.915 1)" text-anchor="middle" letter-spacing="-0.6">3.0</text><text transform="translate(426.5 367) scale(0.915 1)" text-anchor="middle" letter-spacing="-0.6">3.5</text><text transform="translate(478.5 367) scale(0.915 1)" text-anchor="middle" letter-spacing="-0.6">4.0</text><text transform="translate(530.5 367) scale(0.915 1)" text-anchor="middle" letter-spacing="-0.6">4.5</text><text transform="translate(275.5 68) scale(0.915 1)" text-anchor="start" letter-spacing="0.15">recorded</text><text transform="translate(323.5 68) scale(0.915 1)" text-anchor="start" letter-spacing="0.2">with</text><text transform="translate(350 68) scale(0.915 1)" text-anchor="start" letter-spacing="-0.5">PLEXTOR</text><text transform="translate(403.5 68) scale(0.915 1)" text-anchor="start" letter-spacing="0.1">DVDR</text><text transform="translate(447.8 68) scale(0.915 1)" text-anchor="start" letter-spacing="0.1">PX-716A</text><text transform="translate(505 68) scale(0.915 1)" text-anchor="start" letter-spacing="-0.5">v1.06</text></svg>
<div style="position:absolute;left:18px;top:374px;width:168px;height:61px;border:1px solid #7f7f7f"></div>
<div style="position:absolute;left:27px;top:370px;width:63px;height:10px;background:#fff;"></div>
<div style="position:absolute;left:28px;top:371px;width:6px;height:6px;border:1px solid #000;background:#00ffff"></div>
<div style="position:absolute;left:41px;top:368px;font-size:12px;line-height:12px;color:#000;white-space:pre;transform:scaleX(0.915);transform-origin:0 0;">PI Errors</div>
<div style="position:absolute;left:26.5px;top:381px;font-size:13px;line-height:13px;color:#000;white-space:pre;letter-spacing:-1.6px;">平均<span style="margin-left:1px">:</span></div>
<div style="position:absolute;right:567.5px;top:383px;font-size:12px;line-height:12px;color:#000080;white-space:pre;letter-spacing:-0.3px;transform:scaleX(0.915);transform-origin:100% 0;">28.29</div>
<div style="position:absolute;left:26.5px;top:400px;font-size:13px;line-height:13px;color:#000;white-space:pre;letter-spacing:-1.6px;">最大<span style="margin-left:1px">:</span></div>
<div style="position:absolute;right:567.5px;top:401px;font-size:12px;line-height:12px;color:#000080;white-space:pre;letter-spacing:-0.3px;transform:scaleX(0.915);transform-origin:100% 0;">71 </div>
<div style="position:absolute;left:26.5px;top:418px;font-size:13px;line-height:13px;color:#000;white-space:pre;letter-spacing:-1.6px;">合計<span style="margin-left:5.5px">:</span></div>
<div style="position:absolute;right:567.5px;top:419px;font-size:12px;line-height:12px;color:#000080;white-space:pre;letter-spacing:-0.3px;transform:scaleX(0.915);transform-origin:100% 0;">404842</div>
<div style="position:absolute;left:198px;top:374px;width:168px;height:61px;border:1px solid #7f7f7f"></div>
<div style="position:absolute;left:207px;top:370px;width:73px;height:10px;background:#fff;"></div>
<div style="position:absolute;left:208px;top:371px;width:6px;height:6px;border:1px solid #000;background:#ffff00"></div>
<div style="position:absolute;left:220.5px;top:368px;font-size:12px;line-height:12px;color:#000;white-space:pre;letter-spacing:0.1px;transform:scaleX(0.915);transform-origin:0 0;">PI Failures</div>
<div style="position:absolute;left:207.5px;top:381px;font-size:13px;line-height:13px;color:#000;white-space:pre;letter-spacing:-1.6px;">平均<span style="margin-left:1px">:</span></div>
<div style="position:absolute;right:385px;top:383px;font-size:12px;line-height:12px;color:#000080;white-space:pre;letter-spacing:-0.3px;transform:scaleX(0.915);transform-origin:100% 0;">0.07</div>
<div style="position:absolute;left:207.5px;top:400px;font-size:13px;line-height:13px;color:#000;white-space:pre;letter-spacing:-1.6px;">最大<span style="margin-left:1px">:</span></div>
<div style="position:absolute;right:385px;top:401px;font-size:12px;line-height:12px;color:#000080;white-space:pre;letter-spacing:-0.3px;transform:scaleX(0.915);transform-origin:100% 0;">8</div>
<div style="position:absolute;left:207.5px;top:418px;font-size:13px;line-height:13px;color:#000;white-space:pre;letter-spacing:-1.6px;">合計<span style="margin-left:5.5px">:</span></div>
<div style="position:absolute;right:385px;top:419px;font-size:12px;line-height:12px;color:#000080;white-space:pre;letter-spacing:-0.3px;transform:scaleX(0.915);transform-origin:100% 0;">756</div>
<div style="position:absolute;left:379px;top:374px;width:169px;height:45px;border:1px solid #7f7f7f"></div>
<div style="position:absolute;left:388px;top:370px;width:40px;height:10px;background:#fff;"></div>
<div style="position:absolute;left:389px;top:371px;width:6px;height:6px;border:1px solid #000;background:#ff00ff"></div>
<div style="position:absolute;left:402px;top:368px;font-size:12px;line-height:12px;color:#000;white-space:pre;transform:scaleX(0.915);transform-origin:0 0;">Jitter</div>
<div style="position:absolute;left:388.5px;top:381px;font-size:13px;line-height:13px;color:#000;white-space:pre;letter-spacing:-1.6px;">平均<span style="margin-left:1px">:</span></div>
<div style="position:absolute;right:204.5px;top:383px;font-size:12px;line-height:12px;color:#000080;white-space:pre;letter-spacing:-0.3px;transform:scaleX(0.915);transform-origin:100% 0;">8.84 %</div>
<div style="position:absolute;left:388.5px;top:400px;font-size:13px;line-height:13px;color:#000;white-space:pre;letter-spacing:-1.6px;">最大<span style="margin-left:1px">:</span></div>
<div style="position:absolute;right:204.5px;top:401px;font-size:12px;line-height:12px;color:#000080;white-space:pre;letter-spacing:-0.3px;transform:scaleX(0.915);transform-origin:100% 0;">11.0 %</div>
<div style="position:absolute;left:390px;top:424px;font-size:12px;line-height:12px;color:#000;white-space:pre;transform:scaleX(0.915);transform-origin:0 0;">PO Failures:</div>
<div style="position:absolute;right:206px;top:424px;font-size:12px;line-height:12px;color:#000080;white-space:pre;transform:scaleX(0.915);transform-origin:100% 0;">0</div>
<div style="position:absolute;left:562px;top:59px;width:66px;height:17px;border:1px solid #2a7a80;border-radius:3px;background:linear-gradient(#fff 0,#fff 59%,#dcdcdc 59%,#dcdcdc 70%,#c2c2c2 70%)"></div>
<div style="position:absolute;left:654px;top:59px;width:66px;height:17px;border:1px solid #2a7a80;border-radius:3px;background:linear-gradient(#fff 0,#fff 59%,#dcdcdc 59%,#dcdcdc 70%,#c2c2c2 70%)"></div>
<div style="position:absolute;left:657px;top:62px;width:60px;height:11px;border:1px dotted #000"></div>
<div style="position:absolute;left:583.5px;top:60px;font-size:13px;line-height:13px;color:#000;white-space:pre;letter-spacing:-1.6px;">開始</div>
<div style="position:absolute;left:666.5px;top:60px;font-size:13px;line-height:13px;color:#000;white-space:pre;letter-spacing:-1.5px;">終了(<u>X</u>)</div>
<div style="position:absolute;left:561px;top:88px;width:161px;height:68px;border:1px solid #c9c9c9;border-radius:4px"></div>
<div style="position:absolute;left:568px;top:82px;width:61px;height:12px;background:#fff;"></div>
<div style="position:absolute;left:568.5px;top:81px;font-size:13px;line-height:13px;color:#108080;white-space:pre;letter-spacing:-1px;"><span style="display:inline-block;transform:scaleX(0.76);transform-origin:0 0;letter-spacing:-1.2px;margin-right:-11.33px">ディスク</span><span style="letter-spacing:-1.2px">情報</span></div>
<div style="position:absolute;left:568.5px;top:94px;font-size:13px;line-height:13px;color:#000;white-space:pre;letter-spacing:-1px;"><span style="display:inline-block;transform:scaleX(0.76);transform-origin:0 0;letter-spacing:-2.0px;margin-right:-7.92px">タイプ</span>:</div>
<div style="position:absolute;left:616.8px;top:95px;font-size:12px;line-height:12px;color:#000080;white-space:pre;letter-spacing:0.9px;transform:scaleX(0.915);transform-origin:0 0;">DVD-R</div>
<div style="position:absolute;left:568.5px;top:110px;font-size:12px;line-height:12px;color:#000;white-space:pre;transform:scaleX(0.915);transform-origin:0 0;">ID:</div>
<div style="position:absolute;left:616.8px;top:110px;font-size:12px;line-height:12px;color:#000080;white-space:pre;transform:scaleX(0.915);transform-origin:0 0;">ProdiscF01</div>
<div style="position:absolute;left:568.5px;top:124px;font-size:13px;line-height:13px;color:#000;white-space:pre;letter-spacing:-1.5px;">日付<span style="margin-left:1px">:</span></div>
<div style="position:absolute;left:616.8px;top:125px;font-size:12px;line-height:12px;color:#000080;white-space:pre;letter-spacing:0.2px;transform:scaleX(0.915);transform-origin:0 0;">29 April 2005</div>
<div style="position:absolute;left:568.5px;top:140px;font-size:12px;line-height:12px;color:#000;white-space:pre;letter-spacing:-0.8px;transform:scaleX(0.915);transform-origin:0 0;">Label:</div>
<div style="position:absolute;left:616.8px;top:140px;font-size:12px;line-height:12px;color:#000080;white-space:pre;letter-spacing:-0.45px;transform:scaleX(0.915);transform-origin:0 0;">CDS_TEST_B2</div>
<div style="position:absolute;left:561px;top:162px;width:161px;height:176px;border:1px solid #c9c9c9;border-radius:4px"></div>
<div style="position:absolute;left:568px;top:156px;width:45px;height:12px;background:#fff;"></div>
<div style="position:absolute;left:570px;top:155px;font-size:12px;line-height:12px;color:#108080;white-space:pre;letter-spacing:0.3px;transform:scaleX(0.915);transform-origin:0 0;">Settings</div>
<div style="position:absolute;left:568.5px;top:172px;font-size:13px;line-height:13px;color:#000;white-space:pre;letter-spacing:-1.3px;">転送速度</div>
<div style="position:absolute;left:568.5px;top:197px;font-size:13px;line-height:13px;color:#000;white-space:pre;letter-spacing:-1.6px;">開始</div>
<div style="position:absolute;left:568.5px;top:220px;font-size:13px;line-height:13px;color:#000;white-space:pre;letter-spacing:-1.3px;">終了位置</div>
<div style="position:absolute;left:631px;top:170px;width:80px;height:18px;border:1px solid #808080;background:#fff"></div>
<div style="position:absolute;left:695px;top:171px;width:17px;height:18px;background:linear-gradient(#fff 0,#fff 50%,#c0c0c0 50%);border:1px solid #8c8c8c;box-sizing:border-box;border-radius:2px"><svg width="15" height="16" style="position:absolute;left:0;top:0"><path d="M4 5.5 L7.5 9.5 L11 5.5" stroke="#1a7a4a" stroke-width="1.6" fill="none"/></svg></div>
<div style="position:absolute;left:634.5px;top:173px;font-size:13px;line-height:13px;color:#000;white-space:pre;letter-spacing:-1px;">最大</div>
<div style="position:absolute;left:631px;top:194px;width:68px;height:16px;border:1px dotted #858585"></div>
<div style="position:absolute;left:631px;top:217px;width:68px;height:16px;border:1px dotted #858585"></div>
<div style="position:absolute;left:633.5px;top:197px;font-size:12px;line-height:12px;color:#000;white-space:pre;letter-spacing:0.2px;transform:scaleX(0.915);transform-origin:0 0;">0000 MB</div>
<div style="position:absolute;left:633.5px;top:220px;font-size:12px;line-height:12px;color:#000;white-space:pre;letter-spacing:0.2px;transform:scaleX(0.915);transform-origin:0 0;">4489 MB</div>
<div style="position:absolute;left:569px;top:242px;width:11px;height:11px;border:1px solid #108080;background:#fff"></div>
<div style="position:absolute;left:584.5px;top:243px;font-size:12px;line-height:12px;color:#000;white-space:pre;letter-spacing:0.15px;transform:scaleX(0.915);transform-origin:0 0;">Quick Scan</div>
<div style="position:absolute;left:569px;top:261px;width:11px;height:11px;border:1px solid #108080;background:#fff"></div>
<svg width="13" height="13" style="position:absolute;left:569px;top:261px"><path d="M3.5 6 L5.7 8.7 L9.7 4" stroke="#18d818" stroke-width="2.3" fill="none"/></svg>
<div style="position:absolute;left:584.5px;top:262px;font-size:12px;line-height:12px;color:#000;white-space:pre;letter-spacing:0.25px;transform:scaleX(0.915);transform-origin:0 0;">Show C1/PIE</div>
<div style="position:absolute;left:569px;top:276px;width:11px;height:11px;border:1px solid #108080;background:#fff"></div>
<svg width="13" height="13" style="position:absolute;left:569px;top:276px"><path d="M3.5 6 L5.7 8.7 L9.7 4" stroke="#18d818" stroke-width="2.3" fill="none"/></svg>
<div style="position:absolute;left:584.5px;top:277px;font-size:12px;line-height:12px;color:#000;white-space:pre;letter-spacing:0.25px;transform:scaleX(0.915);transform-origin:0 0;">Show C2/PIF</div>
<div style="position:absolute;left:569px;top:291px;width:11px;height:11px;border:1px solid #108080;background:#fff"></div>
<svg width="13" height="13" style="position:absolute;left:569px;top:291px"><path d="M3.5 6 L5.7 8.7 L9.7 4" stroke="#18d818" stroke-width="2.3" fill="none"/></svg>
<div style="position:absolute;left:584.5px;top:292px;font-size:12px;line-height:12px;color:#000;white-space:pre;letter-spacing:0.6px;transform:scaleX(0.915);transform-origin:0 0;">Show Jitter</div>
<div style="position:absolute;left:569px;top:306px;width:11px;height:11px;border:1px solid #108080;background:#fff"></div>
<svg width="13" height="13" style="position:absolute;left:569px;top:306px"><path d="M3.5 6 L5.7 8.7 L9.7 4" stroke="#18d818" stroke-width="2.3" fill="none"/></svg>
<div style="position:absolute;left:584.5px;top:307px;font-size:12px;line-height:12px;color:#000;white-space:pre;letter-spacing:-0.05px;transform:scaleX(0.915);transform-origin:0 0;">Show Read Speed</div>
<div style="position:absolute;left:569px;top:321px;width:11px;height:11px;border:1px solid #108080;background:#fff"></div>
<svg width="13" height="13" style="position:absolute;left:569px;top:321px"><path d="M3.5 6 L5.7 8.7 L9.7 4" stroke="#18d818" stroke-width="2.3" fill="none"/></svg>
<div style="position:absolute;left:584.5px;top:322px;font-size:12px;line-height:12px;color:#000;white-space:pre;transform:scaleX(0.915);transform-origin:0 0;">Show Write Speed</div>
<div style="position:absolute;left:561px;top:344px;width:161px;height:23px;border:1px solid #c9c9c9;border-radius:4px"></div>
<div style="position:absolute;left:568.5px;top:349px;font-size:13px;line-height:13px;color:#000;white-space:pre;letter-spacing:-1px;"><span style="letter-spacing:-0.8px">品質</span><span style="display:inline-block;transform:scaleX(0.76);transform-origin:0 0;letter-spacing:-1.4px;margin-right:-8.35px">スコア</span>:</div>
<div style="position:absolute;right:36.5px;top:350px;font-size:12px;line-height:12px;color:#000080;white-space:pre;transform:scaleX(0.915);transform-origin:100% 0;">95</div>
<div style="position:absolute;left:561px;top:374px;width:161px;height:61px;border:1px solid #c9c9c9;border-radius:4px"></div>
<div style="position:absolute;left:568.5px;top:381px;font-size:13px;line-height:13px;color:#000;white-space:pre;letter-spacing:-1.6px;">進行状況<span style="margin-left:1px">:</span></div>
<div style="position:absolute;right:35px;top:382px;font-size:12px;line-height:12px;color:#000080;white-space:pre;transform:scaleX(0.915);transform-origin:100% 0;">100 %</div>
<div style="position:absolute;left:568.5px;top:400px;font-size:13px;line-height:13px;color:#000;white-space:pre;letter-spacing:-1px;"><span style="display:inline-block;transform:scaleX(0.76);transform-origin:0 0;letter-spacing:-1.4px;margin-right:-13.92px">ポジション</span>:</div>
<div style="position:absolute;right:36.5px;top:401px;font-size:12px;line-height:12px;color:#000080;white-space:pre;transform:scaleX(0.915);transform-origin:100% 0;">4488 MB</div>
<div style="position:absolute;left:568.5px;top:417px;font-size:13px;line-height:13px;color:#000;white-space:pre;letter-spacing:-1.6px;">速度<span style="margin-left:1px">:</span></div>
<div style="position:absolute;right:34.5px;top:419px;font-size:12px;line-height:12px;color:#000080;white-space:pre;letter-spacing:0.1px;transform:scaleX(0.915);transform-origin:100% 0;">8.35 X</div>
</body></html>
